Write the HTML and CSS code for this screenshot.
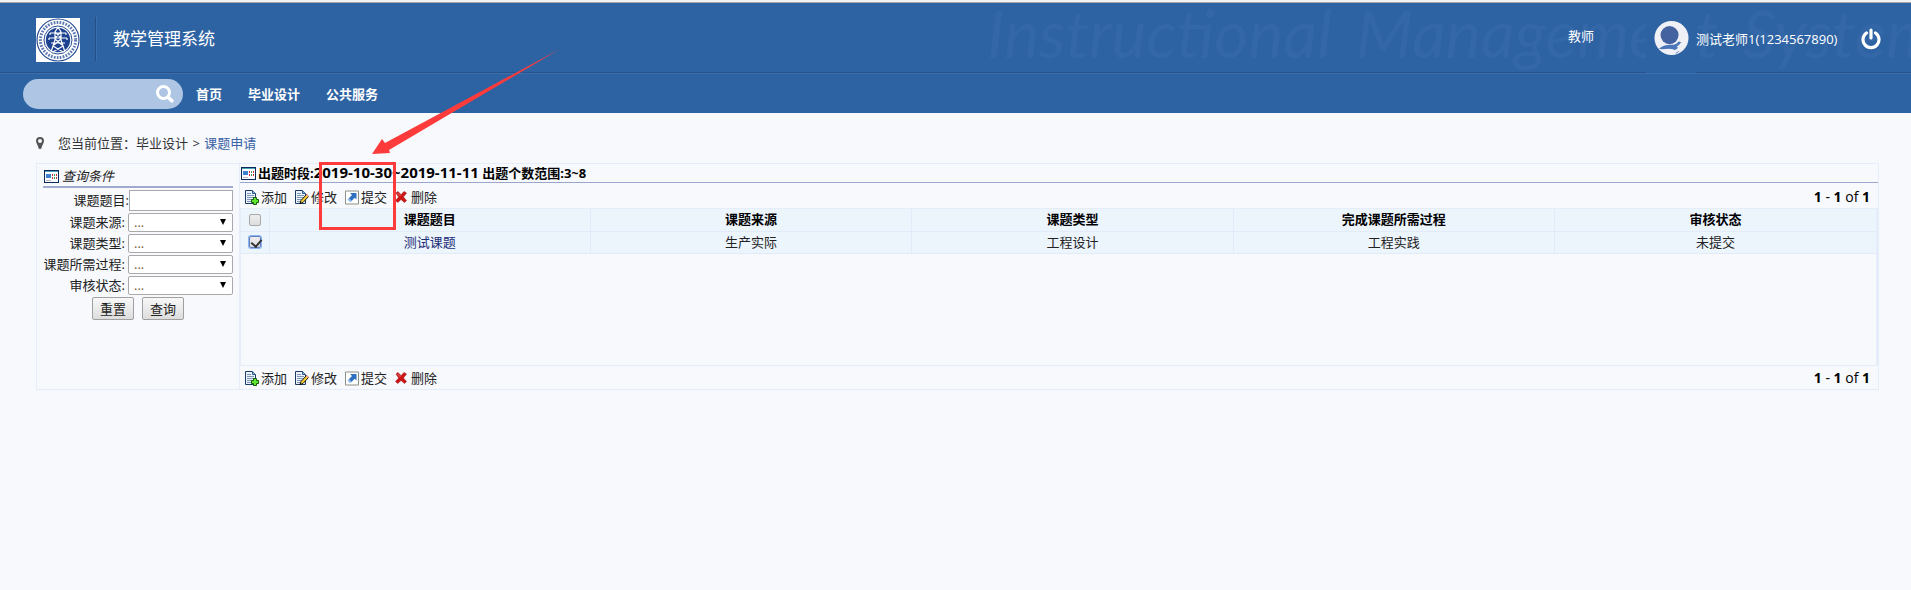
FILE: index.html
```html
<!DOCTYPE html>
<html lang="zh-CN">
<head>
<meta charset="utf-8">
<title>教学管理系统</title>
<link rel="stylesheet" href="styles.css">
</head>
<body>
<svg class="defs" aria-hidden="true">
  <symbol id="i-form" viewBox="0 0 15 13">
    <path fill="#0b2a5b" d="M0 0h15v13H0z"/><path fill="#fff" d="M1 1h13v11H1z"/><path fill="#4aa3b8" d="M1 1h13v1H1z"/>
    <path fill="#3d83cf" d="M2 4h5v4H2z"/><path fill="#bbb" d="M2 10h5v1H2z"/>
    <path fill="#d22d3a" d="M8 4h1v2H8zM12 4h1v2h-1zM8 7h1v2H8z"/><path fill="#3a9a62" d="M10 4h1v2h-1zM10 7h1v2h-1z"/><path fill="#c33" d="M12 7h1v2h-1z"/>
  </symbol>
  <symbol id="i-page" viewBox="0 0 14 15">
    <path fill="#eaf2fb" stroke="#1d3a66" d="M.5.5h7l3 3v10H.5z"/><path fill="#8db6e0" stroke="#2c5a92" d="M7.500.5v3h3"/>
    <path stroke="#7d93b2" d="M2 3.500h4M2 5.500h7M2 7.500h7M2 9.500h7M2 11.500h5"/>
  </symbol>
  <symbol id="i-add" viewBox="0 0 14 15">
    <use href="#i-page" width="14" height="15"/>
    <path fill="#5fe62e" stroke="#145c0c" d="M8.500 7.500h3v2h2v3h-2v2h-3v-2h-2v-3h2z"/>
  </symbol>
  <symbol id="i-edit" viewBox="0 0 14 15">
    <use href="#i-page" width="14" height="15"/>
    <path fill="#f7cf32" stroke="#1c1a12" d="M5 13.500l1-3 5.500-6 2 2-5.500 6z"/><path fill="#f09a9a" d="M11 5l1-1 2 2-1 1z"/><path d="M4.500 14l.7-2 1.300 1.300z"/>
  </symbol>
  <symbol id="i-submit" viewBox="0 0 14 14">
    <path fill="#fff" stroke="#8c8f86" d="M.5.5h13v13H.5z"/><path fill="#2f6fbf" d="M5 2.500h6.500V9L9.700 7.200 6.500 10.400 3.800 7.700 7 4.500z"/><path fill="#8ab8ea" d="M2.500 9l1.300-1.300 2.700 2.700L5.200 11.700z"/>
  </symbol>
  <symbol id="i-del" viewBox="0 0 12 12">
    <path fill="#cf1414" stroke="#9d2020" stroke-width=".6" d="M1 2l2-1.500 3 3.200L9 .5 11.500 2 8.400 6l3.100 3.500L9.500 11.500 6 8.400 2.800 11.500.5 9.500 3.700 6z"/>
    <path stroke="#f08080" stroke-width=".8" d="M2.500 2l3 3"/>
  </symbol>
</svg>

<header class="header">
  <div class="banner">
    <div class="watermark" aria-hidden="true"><span>Instructional</span><span>Management</span><span>System</span></div>
    <svg class="logo" viewBox="0 0 44 44" role="img" aria-label="电气工程学院">
      <path fill="#fff" d="M0 0h44v44H0z"/>
      <circle cx="22" cy="22" r="21" fill="none" stroke="#274c94" stroke-width="1.200"/>
      <circle cx="22" cy="22" r="17.600" fill="none" stroke="#5b78b3" stroke-width="3" stroke-dasharray="1.700 1.300"/>
      <circle cx="22" cy="22" r="14" fill="#fff" stroke="#274c94"/>
      <circle cx="22" cy="22" r="12.200" fill="#1d4390"/>
      <path fill="none" stroke="#fff" stroke-width="1.200" d="M22 9l-3 5v8l-4 12M22 9l3 5v8l4 12M14 15h16M13 20h18M15 25h14M19 14l6 6M25 14l-6 6M19 21l7 6M25 21l-7 6M17 28l10 6M27 28l-10 6M14 15v2M30 15v2M13 20v2M31 20v2"/>
    </svg>
    <h1 class="title">教学管理系统</h1>
    <div class="user">
      <a class="role" href="#">教师</a>
      <a class="avatar" href="#" aria-label="头像">
        <svg viewBox="0 0 36 36" width="36" height="36">
          <circle cx="18" cy="18" r="17.500" fill="#f0f1f6"/>
          <circle cx="16" cy="15" r="9.300" fill="#43629f"/>
          <path fill="#4a75b8" d="M5 29c4-3 8-4 12-4 5 0 6-1 8.500-3.500l3 1c0 3-1 5-4 6l3 1.500c-2 2-3 3-5 4l-3-1 3-2c-2-1-4-2-7-2-4 0-7 1-10.500 0z"/>
          <path fill="#f0f1f6" d="M14 34c2-3 5-3 8-4 3-1 3-3 1-3l3-2 2-3 1.500 2c0 2-2 3-3 4l2 2c-3 2-6 2-7 5z"/>
        </svg>
      </a>
      <span class="name">测试老师1(1234567890)</span>
      <button class="power" type="button" aria-label="退出">
        <svg viewBox="0 0 20 22" width="20" height="22" fill="none" stroke="#fff" stroke-width="3.200" stroke-linecap="round"><path d="M5.500 5a8 8 0 1 0 9 0M10 2v8"/></svg>
      </button>
    </div>
  </div>
  <nav class="nav">
    <form class="search">
      <input type="text" aria-label="搜索">
      <button type="button" aria-label="搜索">
        <svg viewBox="0 0 18 18" width="18" height="18" fill="none" stroke="#fff"><circle cx="7.500" cy="7.500" r="6" stroke-width="3"/><path stroke-width="3.600" stroke-linecap="round" d="M12.500 12.500l3.300 3.300"/></svg>
      </button>
    </form>
    <a href="#">首页</a><a href="#">毕业设计</a><a href="#">公共服务</a>
  </nav>
</header>

<main class="main">
  <div class="crumbs">
    <svg viewBox="0 0 8 12" width="8" height="12"><path fill="#555" fill-rule="evenodd" d="M4 0a4 4 0 0 0-4 4c0 2 2 4 2.500 7 .2 1.300 2.800 1.300 3 0C6 8 8 6 8 4a4 4 0 0 0-4-4zm0 2a2 2 0 1 1 0 4 2 2 0 0 1 0-4z"/></svg>
    <span>您当前位置：毕业设计 <span class="sep">&gt;</span> <a href="#">课题申请</a></span>
  </div>

  <div class="panel">
    <form class="query">
      <h2><svg class="form-icon"><use href="#i-form"/></svg><em>查询条件</em></h2>
      <div class="field text"><label for="q1">课题题目:</label><input id="q1" type="text"></div>
      <div class="field"><label for="q2">课题来源:</label><select id="q2"><option>...</option></select></div>
      <div class="field"><label for="q3">课题类型:</label><select id="q3"><option>...</option></select></div>
      <div class="field"><label for="q4">课题所需过程:</label><select id="q4"><option>...</option></select></div>
      <div class="field"><label for="q5">审核状态:</label><select id="q5"><option>...</option></select></div>
      <div class="buttons"><button type="button">重置</button><button type="button">查询</button></div>
    </form>

    <section class="list">
      <h2><svg class="form-icon"><use href="#i-form"/></svg><span>出题时段:<span class="num">2019-10-30~2019-11-11</span> 出题个数范围:3~8</span></h2>
      <div class="toolbar">
        <button type="button"><svg><use href="#i-add"/></svg>添加</button>
        <button type="button"><svg><use href="#i-edit"/></svg>修改</button>
        <button type="button"><svg><use href="#i-submit"/></svg>提交</button>
        <button type="button"><svg class="small"><use href="#i-del"/></svg>删除</button>
        <span class="pager"><b>1</b> - <b>1</b> of <b>1</b></span>
      </div>
      <div class="grid">
        <table>
          <thead>
            <tr><th class="check"><input type="checkbox" aria-label="全选"></th><th>课题题目</th><th>课题来源</th><th>课题类型</th><th>完成课题所需过程</th><th>审核状态</th></tr>
          </thead>
          <tbody>
            <tr><td class="check"><input class="focused" type="checkbox" aria-label="选择测试课题" checked></td><td><a href="#">测试课题</a></td><td>生产实际</td><td>工程设计</td><td>工程实践</td><td>未提交</td></tr>
          </tbody>
        </table>
      </div>
      <div class="toolbar bottom">
        <button type="button"><svg><use href="#i-add"/></svg>添加</button>
        <button type="button"><svg><use href="#i-edit"/></svg>修改</button>
        <button type="button"><svg><use href="#i-submit"/></svg>提交</button>
        <button type="button"><svg class="small"><use href="#i-del"/></svg>删除</button>
        <span class="pager"><b>1</b> - <b>1</b> of <b>1</b></span>
      </div>
    </section>
  </div>
</main>

<svg class="callout" viewBox="0 0 250 190" aria-hidden="true">
  <path fill="#fd3b3b" d="M62 114l10-15 3 4L250 9 79 110l1 3z"/>
  <path fill="none" stroke="#fd3b3b" stroke-width="3" d="M10.500 123.500h74v65h-74z"/>
</svg>
</body>
</html>
```
FILE: styles.css
```css
* { box-sizing: border-box; }
body {
  margin: 0;
  position: relative;
  min-height: 100vh;
  background: #f7f9fd;
  border-top: 2px solid #f0f1f3;
  color: #222;
  font: 13px/20px "Open Sans", "Noto Sans CJK SC", sans-serif;
}
a { color: inherit; text-decoration: none; }
h1, h2 { margin: 0; }
button, input, select { font: inherit; color: inherit; }
.defs { position: absolute; width: 0; height: 0; }

.header { background: #2e63a3; border-top: 1px solid #a9a5a8; color: #fff; }
.banner {
  position: relative;
  display: flex;
  align-items: center;
  height: 71px;
  padding: 0 30px 0 36px;
  border-bottom: 1px solid #3b6eb0;
  box-shadow: inset 0 -1px #27528a;
  overflow: hidden;
}
.watermark {
  position: absolute;
  left: 987px;
  top: 0;
  display: flex;
  gap: 24px;
  color: #3367a8;
  font: italic 400 66px/60px Lato, sans-serif;
}
.logo { width: 44px; height: 44px; margin-top: 4px; }
.title {
  margin: 2px 0 0 15px;
  padding-left: 17px;
  border-left: 1px solid #235089;
  font-size: 17px;
  font-weight: 400;
  line-height: 44px;
  box-shadow: inset 1px 0 #3b6eb0;
}
.user { position: relative; display: flex; align-items: center; align-self: stretch; margin-left: auto; }
.role { margin: 0 52px 4px 0; }
.avatar { display: flex; align-items: center; align-self: stretch; width: 50px; padding: 0 7px 0 8px; background: #2e63a3; }
.name { min-width: 145px; margin: 2px 20px 0 0; }
.power { display: flex; margin-top: 2px; padding: 0; border: 0; background: none; }

.nav { display: flex; align-items: center; gap: 26px; height: 39px; padding-left: 23px; font-weight: 700; }
.nav .search { display: flex; align-items: center; width: 160px; height: 30px; margin-right: -13px; padding: 0 9px 0 12px; border-radius: 15px; background: #afc5e4; }
.search input { flex: 1; min-width: 0; border: 0; outline: 0; background: none; }
.search button { display: flex; padding: 0; border: 0; background: none; }

.main { padding: 20px 32px 0 36px; }
.crumbs { display: flex; align-items: center; gap: 14px; color: #333; }
.crumbs a { color: #3a62a4; }
.crumbs .sep { margin: 0 1px; }

.panel { display: flex; margin-top: 10px; border: 1px solid #e6edfa; }
.query { width: 202px; padding: 2px 6px 0; }
.query h2, .list h2 { display: flex; align-items: center; font-size: 13px; }
.query h2 { gap: 3px; margin-bottom: 2px; padding-left: 1px; border-bottom: 2px solid #a2aacd; font-weight: 400; line-height: 20px; }
.form-icon { width: 15px; height: 13px; }
.field { display: flex; justify-content: flex-end; align-items: center; gap: 3px; margin-bottom: 2px; line-height: 19px; white-space: nowrap; }
.field.text { gap: 0; }
.field input { width: 104px; height: 21px; border: 1px solid #a9a9a9; background: #fff; }
.field select {
  width: 105px;
  height: 19px;
  padding: 0 5px;
  border: 1px solid #a9a9a9;
  border-radius: 2px;
  appearance: none;
  background: #fff;
  color: #7a5a30;
  line-height: 17px;
}
.field:not(.text) { position: relative; }
.field:not(.text)::after {
  content: "";
  position: absolute;
  right: 7px;
  top: 6px;
  border: 3px solid transparent;
  border-top: 6px solid #000;
  border-bottom: 0;
  pointer-events: none;
}
.buttons { display: flex; justify-content: center; gap: 8px; }
.buttons button { width: 42px; height: 23px; padding: 0; border: 1px solid #a0a0a0; border-radius: 2px; background: linear-gradient(#f8f8f8, #ddd); line-height: 20px; }

.list { flex: 1; min-width: 0; border-left: 1px solid #e6edfa; }
.list h2 { gap: 2px; padding-left: 1px; border-bottom: 1px solid #9aa6cb; color: #000; line-height: 18px; }
.num { font-size: 15px; line-height: 1; }
.pager { font-size: 14px; }
.toolbar { display: flex; align-items: center; gap: 8px; height: 25px; padding: 3px 8px 0 5px; }
.toolbar.bottom { height: 23px; padding-top: 1px; }
.toolbar button { display: flex; align-items: center; gap: 2px; padding: 0; border: 0; background: none; }
.toolbar svg { width: 14px; height: 15px; }
.toolbar svg.small { width: 12px; height: 12px; margin-right: 2px; }
.pager { margin-left: auto; color: #000; }

.grid { min-height: 158px; border: 1px solid #e6edfa; border-width: 1px 2px 1px 1px; }
table { width: 100%; table-layout: fixed; border-collapse: collapse; background: #ecf4fc; color: #000; }
th, td { height: 22px; padding: 0; border: solid #e2ebf9; border-width: 0 0 1px 1px; line-height: 21px; text-align: center; }
th.check, td.check { width: 28px; border-left: 0; }
td { color: #222; }
td a { color: #1c2d78; }
.check input {
  display: block;
  width: 12px;
  height: 12px;
  margin: 0 auto;
  border: 1px solid #a9a9a9;
  border-radius: 2px;
  appearance: none;
  background: linear-gradient(#eee, #ddd);
}
.check input:checked::after {
  content: "";
  display: block;
  width: 5px;
  height: 8px;
  margin-left: 3px;
  border: solid #333;
  border-width: 0 2px 2px 0;
  transform: rotate(40deg);
}
.check .focused { border-color: #5e7fb8; box-shadow: 0 0 0 1px #8db4f4; }

.callout { position: absolute; left: 310px; top: 38px; width: 250px; height: 190px; pointer-events: none; }
```
